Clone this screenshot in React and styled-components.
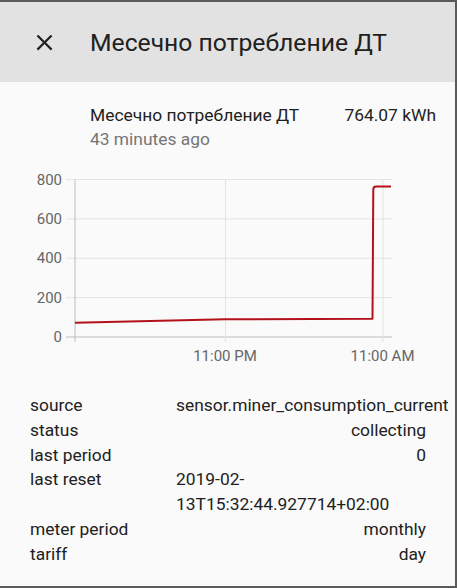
import React from "react";
import styled, { createGlobalStyle } from "styled-components";

const Global = createGlobalStyle`
  html, body { margin: 0; padding: 0; background: #5b5b5b; }
  body { font-family: Roboto, "Noto Sans", sans-serif; }
`;

const Dialog = styled.div`
  margin-top: 2px;
  width: 455px;
  height: 584px;
  background: #fafafa;
  display: flex;
  flex-direction: column;
  color: #212121;
  overflow: hidden;
`;

const Header = styled.div`
  height: 80px;
  flex: none;
  background: #e2e2e2;
  display: flex;
  align-items: center;
`;

const CloseButton = styled.button`
  border: 0;
  background: none;
  padding: 0;
  margin: 0 32px 0 31px;
  width: 27px;
  height: 27px;
  flex: none;
  display: flex;
  color: #212121;
  cursor: pointer;
`;

const Title = styled.h2`
  margin: 0;
  font-size: 24.7px;
  font-weight: 400;
  line-height: 28px;
  padding-top: 1px;
  white-space: nowrap;
`;

const StateInfo = styled.div`
  padding: 21px 19px 0 90px;
`;

const NameRow = styled.div`
  display: flex;
  justify-content: space-between;
  font-size: 17.4px;
  line-height: 24px;
`;

const Secondary = styled.div`
  font-size: 17.4px;
  line-height: 24px;
  color: #757575;
`;

const ChartSvg = styled.svg`
  display: block;
  margin-top: 9px;
  width: 455px;
  height: 232px;
`;

const Attributes = styled.div`
  padding: 1px 29px 0 30px;
  font-size: 17.4px;
  line-height: 24.8px;
`;

const Row = styled.div`
  display: flex;
  justify-content: space-between;
`;

const Key = styled.div`
  flex: none;
`;

const Value = styled.div`
  max-width: 250px;
  min-width: 0;
`;

const yTicks = [800, 600, 400, 200, 0];
const yFor = (v) => 337 - (v / 800) * 157.5;

const attrs = [
  ["source", "sensor.miner_consumption_current"],
  ["status", "collecting"],
  ["last period", "0"],
  ["last reset", "2019-02-13T15:32:44.927714+02:00"],
  ["meter period", "monthly"],
  ["tariff", "day"],
];

function Chart() {
  const left = 75;
  const right = 392;
  return (
    <ChartSvg viewBox="0 160 455 232">
      {yTicks.map((v) => (
        <g key={v}>
          <line
            x1={66}
            x2={right}
            y1={yFor(v)}
            y2={yFor(v)}
            stroke={v === 0 ? "#bdbdbd" : "#e3e3e3"}
            strokeWidth="1"
          />
          <text
            x={62}
            y={yFor(v) + 5}
            textAnchor="end"
            fontSize="15"
            fill="#666"
            fontFamily="Roboto, sans-serif"
          >
            {v}
          </text>
        </g>
      ))}
      <line x1={left} x2={left} y1={179.5} y2={342} stroke="#bdbdbd" strokeWidth="1" />
      {[225.5, 383].map((x) => (
        <line key={x} x1={x} x2={x} y1={179.5} y2={342} stroke="#e3e3e3" strokeWidth="1" />
      ))}
      <text x={225} y={360.5} textAnchor="middle" fontSize="15" fill="#666" fontFamily="Roboto, sans-serif">
        11:00 PM
      </text>
      <text x={382.5} y={360.5} textAnchor="middle" fontSize="15" fill="#666" fontFamily="Roboto, sans-serif">
        11:00 AM
      </text>
      <path
        d="M75 322.7 L225 319.3 L372.5 318.7 L373.3 189 Q373.6 186.4 376 186.4 L391 186.4"
        fill="none"
        stroke="#b3121b"
        strokeWidth="2"
        strokeLinejoin="round"
      />
    </ChartSvg>
  );
}

export default function App() {
  return (
    <>
      <Global />
      <Dialog>
        <Header>
          <CloseButton aria-label="close">
            <svg viewBox="0 0 24 24" width="27" height="27">
              <path
                fill="currentColor"
                d="M19,6.41L17.59,5L12,10.59L6.41,5L5,6.41L10.59,12L5,17.59L6.41,19L12,13.41L17.59,19L19,17.59L13.41,12L19,6.41Z"
              />
            </svg>
          </CloseButton>
          <Title>Месечно потребление ДТ</Title>
        </Header>
        <StateInfo>
          <NameRow>
            <span>Месечно потребление ДТ</span>
            <span>764.07 kWh</span>
          </NameRow>
          <Secondary>43 minutes ago</Secondary>
        </StateInfo>
        <Chart />
        <Attributes>
          {attrs.map(([k, v]) => (
            <Row key={k}>
              <Key>{k}</Key>
              <Value>{v}</Value>
            </Row>
          ))}
        </Attributes>
      </Dialog>
    </>
  );
}
